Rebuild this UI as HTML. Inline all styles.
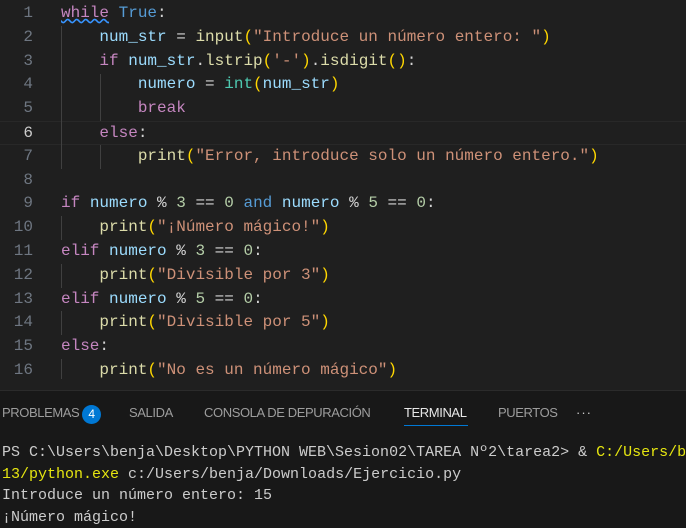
<!DOCTYPE html>
<html><head><meta charset="utf-8"><style>
*{margin:0;padding:0;box-sizing:border-box}
body{width:686px;height:528px;background:#1f1f1f;overflow:hidden;position:relative;font-family:"Liberation Mono",monospace}
.ed{position:absolute;top:2px;left:0;width:686px}
.l{height:23.8px;line-height:23.8px;font-size:16px;white-space:pre;position:relative}
.n{position:absolute;left:0;width:33px;text-align:right;color:#6e7681}
.c{position:absolute;left:61px;color:#d4d4d4}
.cur{border-top:1px solid #282828;border-bottom:1px solid #282828}
.cur .n{color:#cccccc}
.k{color:#c586c0}.b{color:#569cd6}.v{color:#9cdcfe}.f{color:#dcdcaa}.s{color:#ce9178}.m{color:#b5cea8}.y{color:#ffd700}.p{color:#da70d6}
.g{position:absolute;width:1px;background:#404040}
.panel{position:absolute;top:390px;left:0;width:686px;height:138px;background:#181818;border-top:1px solid #2b2b2b}
.tabs{position:absolute;top:14px;left:0;font-family:"Liberation Sans",sans-serif;font-size:13px;color:#9d9d9d;letter-spacing:-0.4px}
.tabs span{position:absolute;white-space:nowrap;top:0}
.badge{display:inline-block;width:19px;height:19px;border-radius:50%;background:#0078d4;color:#fff;text-align:center;line-height:19px;font-size:12px;position:absolute;top:-2px;left:82px}
.term{position:absolute;top:51px;left:2px;font-size:15px;color:#cccccc;white-space:pre;line-height:21.5px;letter-spacing:0px}
.ye{color:#e5e510}
</style></head><body>
<div class="ed">
<div class="l"><span class="n">1</span><span class="c"><span class="k" style="text-decoration:underline wavy #3794ff">while</span> <span class="b">True</span>:</span></div>
<div class="l"><span class="n">2</span><span class="c">    <span class="v">num_str</span> = <span class="f">input</span><span class="y">(</span><span class="s">"Introduce un número entero: "</span><span class="y">)</span></span></div>
<div class="l"><span class="n">3</span><span class="c">    <span class="k">if</span> <span class="v">num_str</span>.<span class="f">lstrip</span><span class="y">(</span><span class="s">'-'</span><span class="y">)</span>.<span class="f">isdigit</span><span class="y">()</span>:</span></div>
<div class="l"><span class="n">4</span><span class="c">        <span class="v">numero</span> = <span class="b" style="color:#4ec9b0">int</span><span class="y">(</span><span class="v">num_str</span><span class="y">)</span></span></div>
<div class="l"><span class="n">5</span><span class="c">        <span class="k">break</span></span></div>
<div class="l cur"><span class="n">6</span><span class="c">    <span class="k">else</span>:</span></div>
<div class="l"><span class="n">7</span><span class="c">        <span class="f">print</span><span class="y">(</span><span class="s">"Error, introduce solo un número entero."</span><span class="y">)</span></span></div>
<div class="l"><span class="n">8</span><span class="c"></span></div>
<div class="l"><span class="n">9</span><span class="c"><span class="k">if</span> <span class="v">numero</span> % <span class="m">3</span> == <span class="m">0</span> <span class="b">and</span> <span class="v">numero</span> % <span class="m">5</span> == <span class="m">0</span>:</span></div>
<div class="l"><span class="n">10</span><span class="c">    <span class="f">print</span><span class="y">(</span><span class="s">"¡Número mágico!"</span><span class="y">)</span></span></div>
<div class="l"><span class="n">11</span><span class="c"><span class="k">elif</span> <span class="v">numero</span> % <span class="m">3</span> == <span class="m">0</span>:</span></div>
<div class="l"><span class="n">12</span><span class="c">    <span class="f">print</span><span class="y">(</span><span class="s">"Divisible por 3"</span><span class="y">)</span></span></div>
<div class="l"><span class="n">13</span><span class="c"><span class="k">elif</span> <span class="v">numero</span> % <span class="m">5</span> == <span class="m">0</span>:</span></div>
<div class="l"><span class="n">14</span><span class="c">    <span class="f">print</span><span class="y">(</span><span class="s">"Divisible por 5"</span><span class="y">)</span></span></div>
<div class="l"><span class="n">15</span><span class="c"><span class="k">else</span>:</span></div>
<div class="l"><span class="n">16</span><span class="c">    <span class="f">print</span><span class="y">(</span><span class="s">"No es un número mágico"</span><span class="y">)</span></span></div>
</div>
<div class="g" style="left:61px;top:26px;height:143px"></div>
<div class="g" style="left:100px;top:74px;height:47px"></div>
<div class="g" style="left:100px;top:145px;height:24px"></div>
<div class="g" style="left:61px;top:216px;height:24px"></div>
<div class="g" style="left:61px;top:264px;height:24px"></div>
<div class="g" style="left:61px;top:311px;height:24px"></div>
<div class="g" style="left:61px;top:359px;height:20px"></div>
<div class="panel">
<div class="tabs">
<span style="left:2px">PROBLEMAS</span><span class="badge">4</span>
<span style="left:129px">SALIDA</span>
<span style="left:204px">CONSOLA DE DEPURACIÓN</span>
<span style="left:404px;color:#e7e7e7">TERMINAL</span>
<span style="left:498px">PUERTOS</span>
<span style="left:576px;letter-spacing:1px;color:#ccc">···</span>
</div>
<div style="position:absolute;left:404px;top:34px;width:64px;height:1px;background:#0078d4"></div>
<div class="term">PS C:\Users\benja\Desktop\PYTHON WEB\Sesion02\TAREA Nº2\tarea2&gt; &amp; <span class="ye">C:/Users/b</span>
<span class="ye">13/python.exe</span> c:/Users/benja/Downloads/Ejercicio.py
Introduce un número entero: 15
¡Número mágico!</div>
</div>
</body></html>
